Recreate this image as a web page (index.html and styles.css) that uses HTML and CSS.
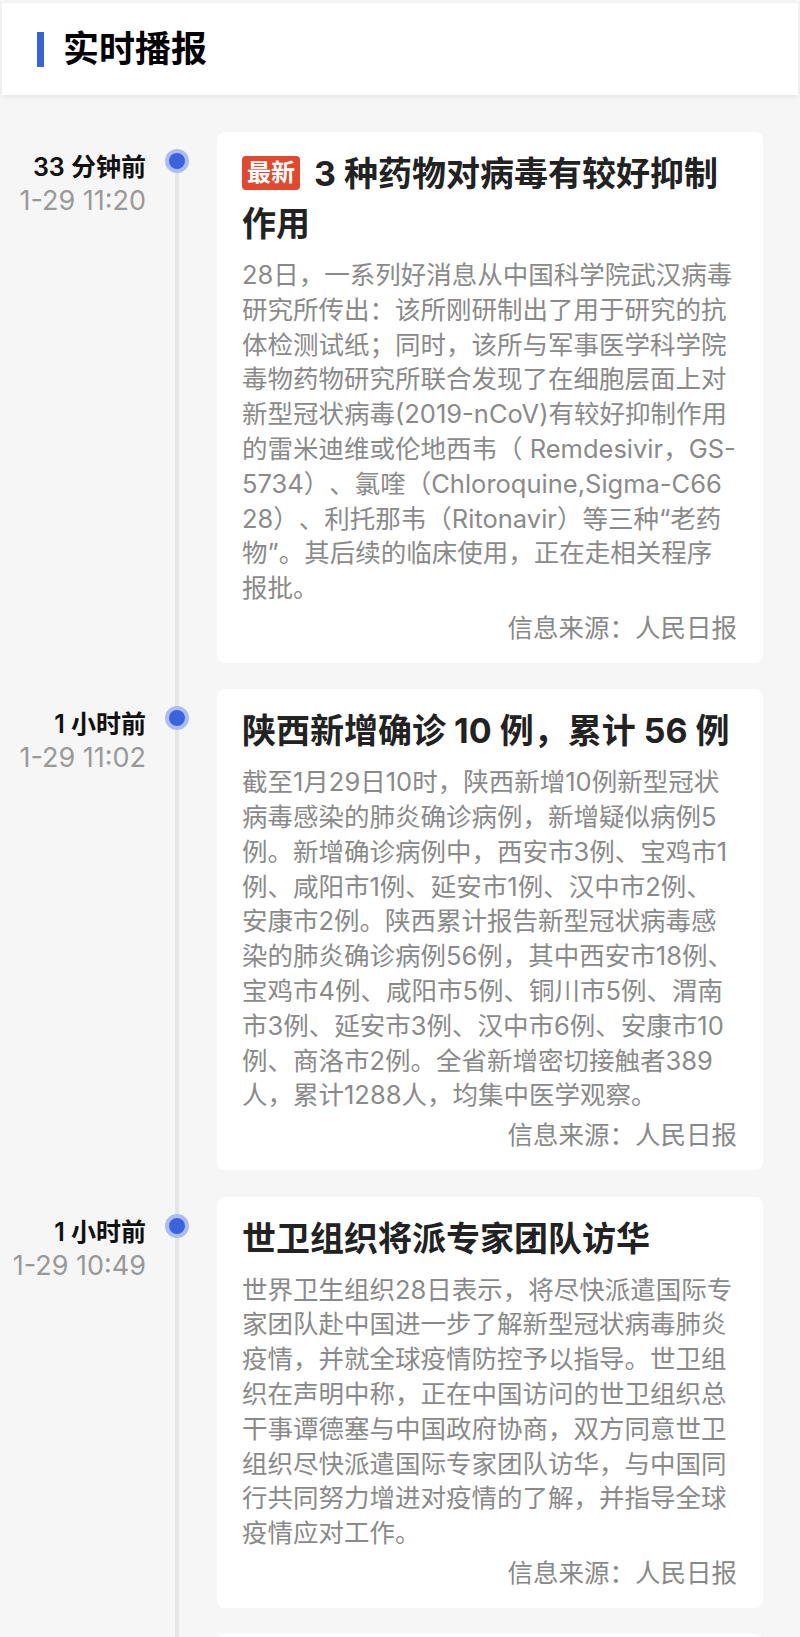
FILE: index.html
```html
<!DOCTYPE html>
<html lang="zh-CN">

<head>
    <meta charset="UTF-8">
    <meta name="viewport" content="width=device-width, initial-scale=1.0">
    <title>实时播报</title>
    <link rel="stylesheet" href="styles.css">
</head>

<body>
    <header class="header">
        <span class="bar"></span>
        <h1>实时播报</h1>
    </header>

    <ul class="timeline">
        <li class="item">
            <div class="when">
                <div class="ago">33 分钟前</div>
                <div class="date">1-29 11:20</div>
            </div>
            <div class="axis"><span class="dot"></span></div>
            <div class="card">
                <h2 class="title"><span class="tag">最新</span>3 种药物对病毒有较好抑制作用</h2>
                <p class="desc">28日，一系列好消息从中国科学院武汉病毒<br>研究所传出：该所刚研制出了用于研究的抗<br>体检测试纸；同时，该所与军事医学科学院<br>毒物药物研究所联合发现了在细胞层面上对<br>新型冠状病毒(2019-nCoV)有较好抑制作用<br>的雷米迪维或伦地西韦（ Remdesivir，GS-<br>5734）、氯喹（Chloroquine,Sigma-C66<br>28）、利托那韦（Ritonavir）等三种“老药<br>物”。其后续的临床使用，正在走相关程序<br>报批。</p>
                <p class="source">信息来源：人民日报</p>
            </div>
        </li>
        <li class="item">
            <div class="when">
                <div class="ago">1 小时前</div>
                <div class="date">1-29 11:02</div>
            </div>
            <div class="axis"><span class="dot"></span></div>
            <div class="card">
                <h2 class="title">陕西新增确诊 10 例，累计 56 例</h2>
                <p class="desc">截至1月29日10时，陕西新增10例新型冠状<br>病毒感染的肺炎确诊病例，新增疑似病例5<br>例。新增确诊病例中，西安市3例、宝鸡市1<br>例、咸阳市1例、延安市1例、汉中市2例、<br>安康市2例。陕西累计报告新型冠状病毒感<br>染的肺炎确诊病例56例，其中西安市18例、<br>宝鸡市4例、咸阳市5例、铜川市5例、渭南<br>市3例、延安市3例、汉中市6例、安康市10<br>例、商洛市2例。全省新增密切接触者389<br>人，累计1288人，均集中医学观察。</p>
                <p class="source">信息来源：人民日报</p>
            </div>
        </li>
        <li class="item">
            <div class="when">
                <div class="ago">1 小时前</div>
                <div class="date">1-29 10:49</div>
            </div>
            <div class="axis"><span class="dot"></span></div>
            <div class="card">
                <h2 class="title">世卫组织将派专家团队访华</h2>
                <p class="desc">世界卫生组织28日表示，将尽快派遣国际专<br>家团队赴中国进一步了解新型冠状病毒肺炎<br>疫情，并就全球疫情防控予以指导。世卫组<br>织在声明中称，正在中国访问的世卫组织总<br>干事谭德塞与中国政府协商，双方同意世卫<br>组织尽快派遣国际专家团队访华，与中国同<br>行共同努力增进对疫情的了解，并指导全球<br>疫情应对工作。</p>
                <p class="source">信息来源：人民日报</p>
            </div>
        </li>
        <li class="item">
            <div class="when">
                <div class="ago">1 小时前</div>
                <div class="date">1-29 10:31</div>
            </div>
            <div class="axis"><span class="dot"></span></div>
            <div class="card">
                <h2 class="title">湖北新增确诊病例 840 例</h2>
                <p class="desc">湖北省卫健委通报最新疫情情况。</p>
                <p class="source">信息来源：人民日报</p>
            </div>
        </li>
    </ul>
</body>

</html>
```

FILE: styles.css
```css
body {
    font-family: Inter, "Noto Sans CJK SC", sans-serif;
    background-color: #f6f6f6;
    margin: 0;
    padding: 0;
    text-spacing-trim: space-all;
}

.header {
    display: flex;
    align-items: center;
    height: 92px;
    margin: 3px 2px 0;
    padding-left: 35px;
    background-color: #fff;
    box-shadow: 0px 2px 6px 0px rgba(0, 0, 0, 0.07);
}

.bar {
    width: 7px;
    height: 35px;
    margin-right: 19px;
    background-color: #3a63db;
}

.header h1 {
    margin: 0;
    font-size: 36px;
    font-weight: 700;
    line-height: 40px;
    color: #000;
}

.timeline {
    list-style: none;
    margin: 0;
    padding: 37px 0 0;
}

.item {
    display: flex;
    margin-bottom: 26.5px;
}

.when {
    flex: none;
    width: 146px;
    padding-top: 18px;
    text-align: right;
    line-height: 34px;
}

.ago {
    font-size: 25px;
    font-weight: 600;
    color: #111;
}

.date {
    font-size: 27px;
    color: #999;
}

.axis {
    flex: none;
    position: relative;
    width: 71px;
}

.axis::before {
    content: '';
    position: absolute;
    left: 29px;
    top: 0;
    bottom: -27px;
    width: 4px;
    background-color: #e6e6e6;
}

.item:first-child .axis::before {
    top: 29px;
}

.dot {
    position: absolute;
    left: 23px;
    top: 21px;
    width: 16px;
    height: 16px;
    border-radius: 50%;
    background-color: #3b63e0;
    box-shadow: 0 0 0 4px #aebdf0;
}

.card {
    flex: 1;
    min-width: 0;
    margin-right: 37px;
    padding: 17px 26px 17px 25px;
    background-color: #fff;
    border-radius: 8px;
}

.title {
    margin: 0 0 9px;
    font-size: 34px;
    font-weight: 700;
    line-height: 50px;
    color: #222;
}

.tag {
    display: inline-block;
    vertical-align: 5px;
    margin-right: 14px;
    padding: 0 5px;
    border-radius: 4px;
    background-color: #e1482d;
    color: #fff;
    font-size: 24px;
    line-height: 34px;
}

.desc {
    margin: 0 -14px 0 0;
    font-size: 25.5px;
    line-height: 34.8px;
    color: #8a8a8a;
}

.source {
    margin: 5px 0 0;
    text-align: right;
    font-size: 25.5px;
    line-height: 34.8px;
    color: #888;
}
```
